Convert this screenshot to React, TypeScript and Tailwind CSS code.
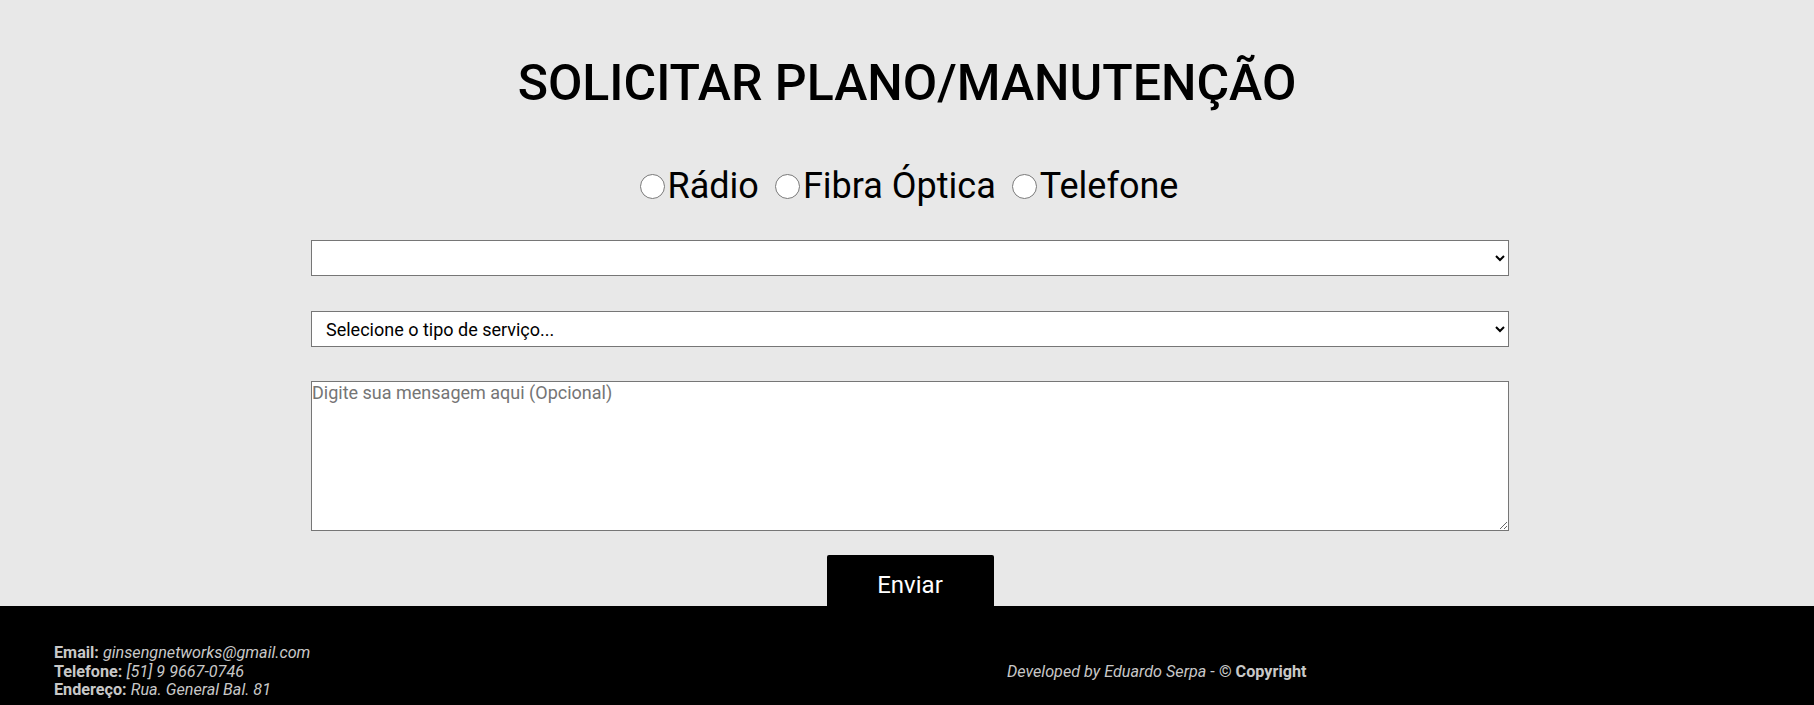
import React from 'react';

const font = { fontFamily: 'Roboto, "Noto Sans", sans-serif' };

function RadioOption({ label, name }: { label: string; name: string }) {
  return (
    <label className="flex items-center cursor-pointer">
      <input type="radio" name={name} className="w-[25px] h-[25px] m-0 mr-[3px] accent-black" />
      <span>{label}</span>
    </label>
  );
}

export default function App() {
  return (
    <div className="min-h-screen bg-[#e8e8e8] text-black flex flex-col" style={font}>
      <main className="flex flex-col items-center pt-[54px]">
        <h1 className="text-[50px] leading-[59px] font-medium">SOLICITAR PLANO/MANUTENÇÃO</h1>

        <div className="flex items-center gap-[16px] text-[36px] leading-[41px] mt-[53px] ml-[4px]">
          <RadioOption name="plano" label="Rádio" />
          <RadioOption name="plano" label="Fibra Óptica" />
          <RadioOption name="plano" label="Telefone" />
        </div>

        <form className="flex flex-col items-center w-[1198px] mt-[33px] ml-[6px]">
          <select className="w-full h-[36px] bg-white border border-[#767676] rounded-none text-[18px] px-[10px]">
            <option value=""></option>
          </select>

          <select className="w-full h-[36px] mt-[35px] bg-white border border-[#767676] rounded-none text-[18px] px-[10px]">
            <option value="">Selecione o tipo de serviço...</option>
          </select>

          <textarea
            placeholder="Digite sua mensagem aqui (Opcional)"
            className="w-full h-[150px] mt-[34px] bg-white border border-[#767676] rounded-none text-[18px] leading-[21px] p-0 placeholder:text-[#757575]"
          />

          <button
            type="button"
            className="w-[167px] h-[51px] mt-[24px] bg-black text-white text-[24px] leading-[28px] pt-[9px] rounded-t-[2px]"
          >
            Enviar
          </button>
        </form>
      </main>

      <footer className="bg-black text-[#c8c8c8] text-[16.2px] leading-[18.5px] flex items-center pl-[54px] pt-[38px] pb-[24px]">
        <div className="w-[953px] flex flex-col">
          <p>
            <b>Email:</b> <i>ginsengnetworks@gmail.com</i>
          </p>
          <p>
            <b>Telefone:</b> <i>[51] 9 9667-0746</i>
          </p>
          <p>
            <b>Endereço:</b> <i>Rua. General Bal. 81</i>
          </p>
        </div>
        <p>
          <i>Developed by Eduardo Serpa</i> - <b>© Copyright</b>
        </p>
      </footer>
    </div>
  );
}
